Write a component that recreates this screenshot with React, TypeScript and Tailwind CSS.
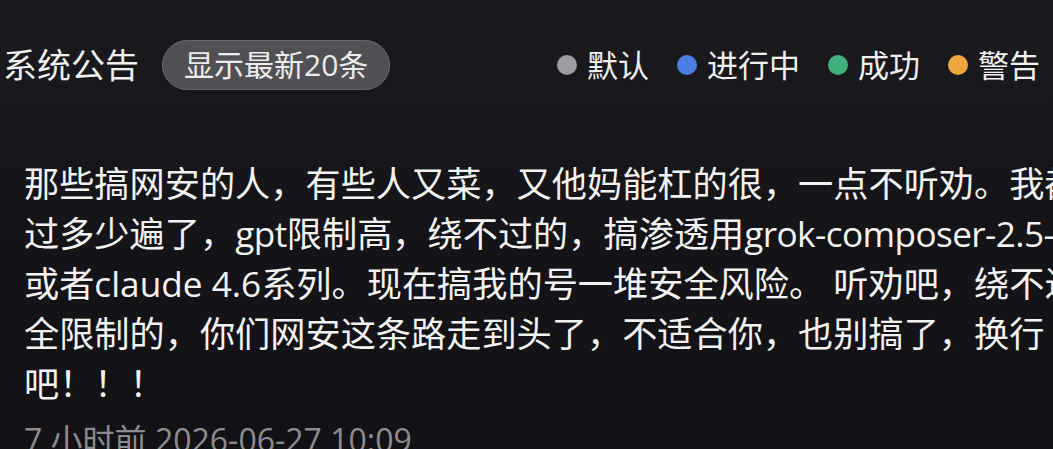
import React from "react";

const legend = [
  { label: "默认", color: "bg-[#9c9ca0]" },
  { label: "进行中", color: "bg-[#4d7fe3]" },
  { label: "成功", color: "bg-[#3fb07c]" },
  { label: "警告", color: "bg-[#eea53c]" },
];

const lines: React.ReactNode[] = [
  "那些搞网安的人，有些人又菜，又他妈能杠的很，一点不听劝。我都说",
  <>
    过多少遍了，<span className="tracking-[-0.5px]">gpt</span>限制高，绕不过的，搞渗透用
    <span className="tracking-[-0.6px]">grok-composer-2.5-fast</span>，
  </>,
  "或者claude 4.6系列。现在搞我的号一堆安全风险。 听劝吧，绕不过安",
  "全限制的，你们网安这条路走到头了，不适合你，也别搞了，换行",
  "吧！！！",
];

export default function App() {
  return (
    <div
      className="w-[1053px] h-[449px] overflow-hidden bg-linear-to-b from-[#1b1a1e] via-[#151418] to-[#121115] text-[#f2f2f2]"
      style={{ fontFamily: '"Open Sans", "Noto Sans CJK SC", sans-serif' }}
    >
      <div className="flex h-[130px] items-center pl-[3px] pr-[13px]">
        <div className="text-[34px] leading-none whitespace-nowrap text-[#f0f0f0]">系统公告</div>
        <div className="ml-[23px] flex h-[50px] items-center rounded-full border-[1.5px] border-[#67676c] bg-[#505055] px-[21px] text-[30px] leading-none whitespace-nowrap text-[#ececec]">
          显示最新20条
        </div>
        <div className="ml-auto flex items-center gap-[28px]">
          {legend.map((l) => (
            <div key={l.label} className="flex items-center gap-[10px]">
              <span className={`block h-[20px] w-[20px] rounded-full ${l.color}`} />
              <span className="text-[31px] leading-none whitespace-nowrap text-[#f0f0f0]">{l.label}</span>
            </div>
          ))}
        </div>
      </div>
      <div className="mt-[28px] pl-[24px]">
        {lines.map((t, i) => (
          <div key={i} className="text-[35.2px] leading-[50px] whitespace-nowrap">
            {t}
          </div>
        ))}
        <div className="mt-[7px] text-[32px] leading-[50px] whitespace-nowrap text-[#8c8c90]">
          7 小时前 2026-06-27 10:09
        </div>
      </div>
    </div>
  );
}
